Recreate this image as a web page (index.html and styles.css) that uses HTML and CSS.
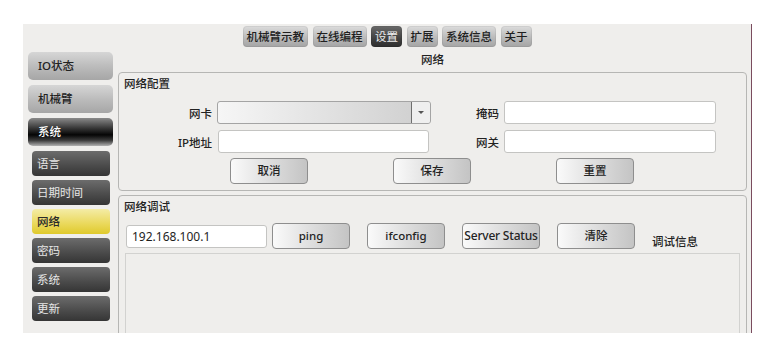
FILE: index.html
```html
<!DOCTYPE html>
<html lang="zh-CN">
<head>
    <meta charset="UTF-8">
    <title>设置 - 网络</title>
    <link rel="stylesheet" href="styles.css">
</head>
<body>
    <div class="window">
        <!-- top navigation -->
        <div class="topbar">
            <div class="tab">机械臂示教</div>
            <div class="tab">在线编程</div>
            <div class="tab active">设置</div>
            <div class="tab">扩展</div>
            <div class="tab">系统信息</div>
            <div class="tab">关于</div>
        </div>

        <div class="body">
            <nav class="sidebar">
                <div class="side-btn">IO状态</div>
                <div class="side-btn">机械臂</div>
                <div class="side-btn active">系统</div>
                <div class="sub-btn">语言</div>
                <div class="sub-btn">日期时间</div>
                <div class="sub-btn active">网络</div>
                <div class="sub-btn">密码</div>
                <div class="sub-btn">系统</div>
                <div class="sub-btn">更新</div>
            </nav>

            <main class="content">
                <div class="page-title">网络</div>

                <!-- network config -->
                <section class="group config">
                    <div class="group-title">网络配置</div>
                    <div class="form-grid">
                        <label class="field-label">网卡</label>
                        <div class="combo">
                            <span class="combo-value"></span>
                            <span class="combo-arrow"></span>
                        </div>
                        <label class="field-label">掩码</label>
                        <input class="text-input" type="text">

                        <label class="field-label">IP地址</label>
                        <input class="text-input ip" type="text">
                        <label class="field-label">网关</label>
                        <input class="text-input" type="text">
                    </div>
                    <div class="button-row">
                        <div class="btn">取消</div>
                        <div class="btn">保存</div>
                        <div class="btn">重置</div>
                    </div>
                </section>

                <!-- network debug -->
                <section class="group debug">
                    <div class="group-title">网络调试</div>
                    <div class="debug-row">
                        <input class="text-input host" type="text" value="192.168.100.1">
                        <div class="btn">ping</div>
                        <div class="btn">ifconfig</div>
                        <div class="btn plain">Server Status</div>
                        <div class="btn">清除</div>
                        <span class="debug-label">调试信息</span>
                    </div>
                    <div class="debug-output"></div>
                </section>
            </main>
        </div>
    </div>
</body>
</html>
```

FILE: styles.css
```css
body {
    margin: 0;
    padding: 0;
    background: #ffffff;
    font-family: 'Noto Sans', 'Noto Sans CJK SC', sans-serif;
    font-size: 11.5px;
    color: #222222;
}

.window {
    margin: 24px 0 0 23px;
    width: 728px;
    height: 309px;
    background: #efeeec;
    border-right: 1px solid #7a4c5e;
    overflow: hidden;
    display: flex;
    flex-direction: column;
}

/* top tabs */
.topbar {
    height: 25px;
    flex-shrink: 0;
    padding-top: 2px;
    box-sizing: border-box;
    display: flex;
    justify-content: center;
    gap: 4.5px;
}

.tab {
    height: 21px;
    line-height: 21px;
    padding: 0 4px;
    border-radius: 4px;
    font-weight: 500;
    color: #202020;
    background: linear-gradient(to bottom, #dcdcdc, #b8b8b8 60%, #a4a4a4);
    box-shadow: inset 0 0 0 1px rgba(0, 0, 0, 0.06);
}

.tab.active {
    color: #eeeeee;
    font-weight: normal;
    background: linear-gradient(to bottom, #6a6a6a, #404040 60%, #2e2e2e);
}

.body {
    flex: 1;
    display: flex;
    min-height: 0;
}

/* left menu */
.sidebar {
    width: 95px;
    flex-shrink: 0;
    padding-top: 3px;
    box-sizing: border-box;
    display: flex;
    flex-direction: column;
}

.side-btn {
    width: 85px;
    height: 28px;
    line-height: 28px;
    margin: 0 0 5px 5px;
    padding-left: 10px;
    box-sizing: border-box;
    border-radius: 5px;
    font-weight: 500;
    color: #222222;
    background: linear-gradient(to bottom, #d6d6d6, #bcbcbc 50%, #a6a6a6);
}

.side-btn.active {
    color: #ffffff;
    background: linear-gradient(to bottom, #8a8a8a, #3a3a3a 35%, #050505 60%, #3c3c3c 80%, #b2b2b2);
}

.sub-btn {
    width: 78px;
    height: 25px;
    line-height: 25px;
    margin: 0 0 4px 9px;
    padding-left: 5px;
    box-sizing: border-box;
    border-radius: 4px;
    color: #e6e6e6;
    background: linear-gradient(to bottom, #6c6c6c, #4a4a4a 60%, #353535);
}

.sub-btn.active {
    color: #2a2a2a;
    font-weight: 500;
    background: linear-gradient(to bottom, #f4eca6, #ead85a 60%, #dfc92c);
}

/* main area */
.content {
    width: 629px;
    flex-shrink: 0;
    display: flex;
    flex-direction: column;
}

.page-title {
    height: 23px;
    flex-shrink: 0;
    line-height: 22px;
    text-align: center;
    font-weight: 500;
}

.group {
    flex-shrink: 0;
    border: 1px solid #b6b6b4;
    border-radius: 4px;
    box-sizing: border-box;
}

.group-title {
    height: 22px;
    line-height: 22px;
    padding-left: 5px;
    font-weight: 500;
}

.config {
    height: 119px;
}

.form-grid {
    margin-top: 6px;
    display: grid;
    grid-template-columns: 93px 214px 63px 212px;
    grid-template-rows: 23px 23px;
    column-gap: 5px;
    row-gap: 6px;
    align-items: center;
}

.field-label {
    text-align: right;
    font-weight: 500;
}

.text-input {
    height: 23px;
    margin: 0;
    padding: 0 5px;
    box-sizing: border-box;
    border: 1px solid #c4c4c2;
    border-radius: 3px;
    background: #ffffff;
    font-family: 'Noto Sans', 'Noto Sans CJK SC', sans-serif;
    font-size: 12px;
    color: #1e1e1e;
    outline: none;
}

.form-grid .text-input {
    width: 212px;
}

.form-grid .text-input.ip {
    width: 211px;
    margin-left: 1px;
}

.combo {
    height: 23px;
    display: flex;
    box-sizing: border-box;
    border: 1px solid #a4a4a4;
    border-radius: 3px;
    overflow: hidden;
    background: linear-gradient(to right, #f6f6f6, #dadada 70%, #cecece);
}

.combo-value {
    flex: 1;
}

.combo-arrow {
    width: 18px;
    border-left: 1px solid #6e6e6e;
    background: #efefef;
    display: flex;
    align-items: center;
    justify-content: center;
}

.combo-arrow::before {
    content: '';
    border-left: 3px solid transparent;
    border-right: 3px solid transparent;
    border-top: 3px solid #555555;
}

.button-row {
    margin: 5px 0 0 111px;
    display: flex;
    gap: 85px;
}

.btn {
    width: 78px;
    height: 26px;
    line-height: 24px;
    box-sizing: border-box;
    text-align: center;
    border: 1px solid #8e8e8e;
    border-radius: 4px;
    font-weight: 500;
    color: #242424;
    background: linear-gradient(to right, #fafafa, #dedede 50%, #c4c4c4);
}

.btn.plain {
    font-size: 12px;
    letter-spacing: -0.2px;
}

/* debug box */
.debug {
    margin-top: 4px;
    height: 160px;
    display: flex;
    flex-direction: column;
}

.debug-row {
    margin: 5px 0 0 7px;
    display: flex;
    align-items: center;
}

.text-input.host {
    width: 141px;
    margin-right: 5px;
}

.debug-row .btn + .btn {
    margin-left: 17px;
}

.debug-label {
    margin: 10px 0 0 17px;
    font-weight: 500;
}

.debug-output {
    margin: 4px 6px 0 6px;
    flex: 1;
    border: 1px solid #d2d2d0;
    background: #efeeec;
}
```
